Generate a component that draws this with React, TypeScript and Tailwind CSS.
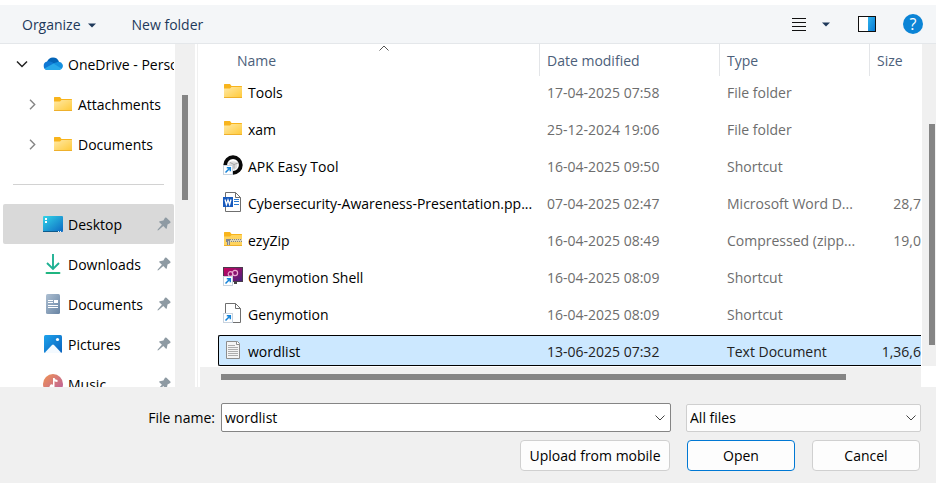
import { useState, type ReactNode } from "react";

/* ---------- Icons ---------- */

function FolderIcon() {
  return (
    <svg width="20" height="16" viewBox="0 0 20 16" className="shrink-0" aria-hidden="true">
      <defs>
        <linearGradient id="folder-front" x1="0" y1="0" x2="1" y2="1">
          <stop offset="0" stopColor="#ffe9a6" />
          <stop offset="1" stopColor="#ffc937" />
        </linearGradient>
      </defs>
      <path d="M1 1.6Q1 1 1.6 1H7l1.500 2h9.900q.6 0 .6.6V6H1z" fill="#f8b41c" />
      <path d="M1 5.500h6L8.500 4H19v10.400q0 .6-.6.6H1.6Q1 15 1 14.400z" fill="url(#folder-front)" />
      <path d="M1 14h18v.5q0 .5-.6.5H1.600Q1 15 1 14.500z" fill="#eeb02c" />
    </svg>
  );
}

function ZipIcon() {
  return (
    <svg width="20" height="16" viewBox="0 0 20 16" className="shrink-0" aria-hidden="true">
      <path d="M1 1.600Q1 1 1.600 1H7l1.500 2h9.900q.6 0 .6.6V6H1z" fill="#f8b41c" />
      <path d="M1 5.500h6L8.500 4H19v10.400q0 .6-.6.6H1.600Q1 15 1 14.400z" fill="#ffd45e" />
      <path d="M1 14h18v1H1z" fill="#eeb02c" />
      <path d="M3 8h16v3H3z" fill="#ddd5b8" />
      <path d="M5 8.500h14M6 10.500h13" stroke="#8d8874" strokeDasharray="1 1" />
      <path d="M3 8h4v6H4V11H3z" fill="#85888d" />
      <path d="M5 10h1v4H5z" fill="#c9ccd0" />
    </svg>
  );
}

function OneDriveIcon() {
  return (
    <svg width="20" height="14" viewBox="0 0 20 14" className="shrink-0" aria-hidden="true">
      <path d="M4 5C5 2 7 .500 10 .500c3 0 5 1.500 6 4.200L11 9 4 7z" fill="#0364b8" />
      <path d="M4.200 4.500c2.300-.5 4.300.3 6.300 1.700L15 9l-7 4H4.500A4.300 4.300 0 0 1 4.200 4.500z" fill="#0f78d4" />
      <path d="M10.500 6.300 15.800 4.700A4.200 4.200 0 0 1 18.500 12L12 9z" fill="#1490df" />
      <path d="M1.500 11.500 10.500 6.500l8.200 5.200c-.7.900-1.700 1.300-2.700 1.300H4.500c-1.200 0-2.300-.6-3-1.500z" fill="#28a8ea" />
    </svg>
  );
}

function DesktopIcon() {
  return (
    <svg width="20" height="16" viewBox="0 0 20 16" className="shrink-0" aria-hidden="true">
      <defs>
        <linearGradient id="desktop-screen" x1="0" y1="0" x2="1" y2="1">
          <stop offset="0" stopColor="#32d5e8" />
          <stop offset="1" stopColor="#0d68c2" />
        </linearGradient>
      </defs>
      <rect width="20" height="16" rx="1" fill="url(#desktop-screen)" />
      <path d="M2 2h2v2H2zM2 5h2v2H2z" fill="#fff" />
      <path d="M0 15h15v1H0z" fill="#0e5b8c" />
      <path d="M15 15.500h1m1 0h1" stroke="#e6f2fb" />
    </svg>
  );
}

function DownloadIcon() {
  return (
    <svg width="20" height="20" viewBox="0 0 20 20" className="shrink-0" aria-hidden="true">
      <path d="M10 0v15M4 9l6 6 6-6" fill="none" stroke="#1fb193" strokeWidth="1.900" />
      <path d="M3.500 19h13" stroke="#1fb580" strokeWidth="1.900" strokeLinecap="round" />
    </svg>
  );
}

function DocumentsIcon() {
  return (
    <svg width="20" height="20" viewBox="0 0 20 20" className="shrink-0" aria-hidden="true">
      <defs>
        <linearGradient id="docs-page" x1="0" y1="0" x2="1" y2="1">
          <stop offset="0" stopColor="#adbfd2" />
          <stop offset="1" stopColor="#6884a3" />
        </linearGradient>
      </defs>
      <rect x="3" width="14" height="20" rx="1.500" fill="url(#docs-page)" />
      <path d="M5 6.500h5M5 8.500h5M5 11.500h10M5 13.500h10" stroke="#fff" />
      <path d="M11 6h4v3h-4z" fill="#fff" />
    </svg>
  );
}

function PicturesIcon() {
  return (
    <svg width="20" height="20" viewBox="0 0 20 20" className="shrink-0" aria-hidden="true">
      <defs>
        <linearGradient id="picture-sky" x1="0" y1="0" x2="1" y2="1">
          <stop offset="0" stopColor="#1fa3ec" />
          <stop offset="1" stopColor="#0a62bd" />
        </linearGradient>
      </defs>
      <rect x="1" y="1" width="18" height="18" rx="1.500" fill="url(#picture-sky)" />
      <path d="M2 18.500 9 11q1-1 2 0l7 7.500q-.500.500-1 .500H3q-.5 0-1-.5z" fill="#f4faff" />
      <circle cx="14.500" cy="5.500" r="1.600" fill="#fff" />
    </svg>
  );
}

function MusicIcon() {
  return (
    <svg width="20" height="20" viewBox="0 0 20 20" className="shrink-0" aria-hidden="true">
      <defs>
        <linearGradient id="music-disc" x1="0" y1="0" x2="1" y2="1">
          <stop offset="0" stopColor="#f19452" />
          <stop offset="1" stopColor="#b55aa5" />
        </linearGradient>
      </defs>
      <circle cx="10" cy="10" r="10" fill="url(#music-disc)" />
      <path d="M10 4h1.500q.5 2 3 2v2q-2 0-3-.8V13a2.500 2.500 0 1 1-1.500-2.300z" fill="#fff" />
    </svg>
  );
}

function PinIcon() {
  return (
    <svg width="14" height="14" viewBox="0 0 14 14" className="shrink-0" aria-hidden="true">
      <path
        d="M8 .800Q8.800.200 9.500.800l3.800 3.800q.6.700-.1 1.300L10.500 7.600 9.800 11.300q-.300.900-1.100.200L6.300 9.100 1.400 13.200l-.900.200.2-.9L4.900 7.700 2.300 5.200q-.4-.8.400-1l3.700-.8z"
        fill="#8e9aa3"
      />
    </svg>
  );
}

function ShortcutBadge() {
  return (
    <>
      <rect x=".5" y="10.500" width="9" height="9" fill="#fff" stroke="#c9d3de" />
      <path d="M2.500 17.500 7 13M3.800 12.700H7.300V16.200" fill="none" stroke="#1583d8" strokeWidth="1.500" />
    </>
  );
}

function ApkIcon() {
  return (
    <svg width="20" height="20" viewBox="0 0 20 20" className="shrink-0" aria-hidden="true">
      <circle cx="10" cy="10" r="7.800" fill="#fff" stroke="#090909" strokeWidth="3.800" />
      <path d="M5 8q4-3 9.500-.5L14 13l-3 2-3-3z" fill="#dcdcdc" />
      <path d="m7 7.500 4 2 4-1.500M11 9.500v4" fill="none" stroke="#999" strokeWidth=".8" />
      <ShortcutBadge />
    </svg>
  );
}

function WordIcon() {
  return (
    <svg width="20" height="20" viewBox="0 0 20 20" className="shrink-0" aria-hidden="true">
      <path d="M2.500.500h10l5 5v14h-15z" fill="#fff" stroke="#6f6f6f" />
      <path d="M12.500.500v5h5" fill="none" stroke="#6f6f6f" />
      <path d="M11 7.500h5M11 9.500h5M11 12.500h5" stroke="#2b7cd3" />
      <rect y="5" width="10" height="10" fill="#185abd" />
      <path d="m2 7.500 1.400 5L5 8l1.600 4.500L8 7.500" fill="none" stroke="#fff" strokeWidth="1.300" />
    </svg>
  );
}

function GenymotionShellIcon() {
  return (
    <svg width="20" height="20" viewBox="0 0 20 20" className="shrink-0" aria-hidden="true">
      <defs>
        <linearGradient id="geny-screen" x1="0" y1="0" x2="1" y2="1">
          <stop offset="0" stopColor="#d0005e" />
          <stop offset="1" stopColor="#42237e" />
        </linearGradient>
      </defs>
      <rect x=".5" y="1.500" width="19" height="14" fill="url(#geny-screen)" stroke="#4a3b4d" />
      <path d="M11 16h3v2h-3z" fill="#454545" />
      <circle cx="7.500" cy="8" r="2.300" fill="none" stroke="#e9aad2" strokeWidth="1.200" />
      <circle cx="12" cy="7" r="2.600" fill="none" stroke="#e9aad2" strokeWidth="1.200" />
      <ShortcutBadge />
    </svg>
  );
}

function BlankShortcutIcon() {
  return (
    <svg width="20" height="20" viewBox="0 0 20 20" className="shrink-0" aria-hidden="true">
      <path d="M2.500.500h10l5 5v14h-15z" fill="#fff" stroke="#6f6f6f" />
      <path d="M12.500.500v5h5" fill="none" stroke="#6f6f6f" />
      <ShortcutBadge />
    </svg>
  );
}

function TextFileIcon() {
  return (
    <svg width="20" height="20" viewBox="0 0 20 20" className="shrink-0" aria-hidden="true">
      <path d="M3.500 1.500h11l2 2v15h-13z" fill="#f4f4f4" stroke="#8d8d8d" />
      <path d="M13.500 1.500v3h3" fill="#fff" stroke="#8d8d8d" />
      <path d="M5 5.500h7M5 7.500h10M5 9.500h10M5 11.500h10M5 13.500h10M5 15.500h10" stroke="#adadad" />
    </svg>
  );
}

function Chevron({ className }: { className: string }) {
  return (
    <svg width="10" height="6" viewBox="0 0 10 6" className={className} aria-hidden="true">
      <path d="m.5.500 4.500 4.500L9.500.500" fill="none" stroke="currentColor" />
    </svg>
  );
}

function Caret() {
  return (
    <svg width="8" height="5" viewBox="0 0 8 5" aria-hidden="true">
      <path d="M0 .500h8L4 4.500z" fill="#1e395b" />
    </svg>
  );
}

/* ---------- Data ---------- */

type Place = { name: string; icon: ReactNode; active?: boolean };

const places: Place[] = [
  { name: "Desktop", icon: <DesktopIcon />, active: true },
  { name: "Downloads", icon: <DownloadIcon /> },
  { name: "Documents", icon: <DocumentsIcon /> },
  { name: "Pictures", icon: <PicturesIcon /> },
  { name: "Music", icon: <MusicIcon /> },
];

type FileRow = { name: string; icon: ReactNode; date: string; type: string; size?: string };

const files: FileRow[] = [
  { name: "Tools", icon: <FolderIcon />, date: "17-04-2025 07:58", type: "File folder" },
  { name: "xam", icon: <FolderIcon />, date: "25-12-2024 19:06", type: "File folder" },
  { name: "APK Easy Tool", icon: <ApkIcon />, date: "16-04-2025 09:50", type: "Shortcut" },
  {
    name: "Cybersecurity-Awareness-Presentation.pp...",
    icon: <WordIcon />,
    date: "07-04-2025 02:47",
    type: "Microsoft Word D...",
    size: "28,7",
  },
  { name: "ezyZip", icon: <ZipIcon />, date: "16-04-2025 08:49", type: "Compressed (zipp...", size: "19,0" },
  { name: "Genymotion Shell", icon: <GenymotionShellIcon />, date: "16-04-2025 08:09", type: "Shortcut" },
  { name: "Genymotion", icon: <BlankShortcutIcon />, date: "16-04-2025 08:09", type: "Shortcut" },
  { name: "wordlist", icon: <TextFileIcon />, date: "13-06-2025 07:32", type: "Text Document", size: "1,36,6" },
];

/* ---------- Sections ---------- */

function Toolbar() {
  return (
    <header className="mt-[5px] flex h-[39px] items-center border-b border-[#e4e7ea] bg-[#f4f6f8] pr-[13px] pl-[22px] text-[#1e395b]">
      <button type="button" className="flex items-center gap-[7px] pt-[2px]">
        Organize <Caret />
      </button>
      <button type="button" className="ml-9 pt-[2px]">
        New folder
      </button>
      <div className="ml-auto flex items-center">
        <button type="button" aria-label="View">
          <svg width="16" height="16" viewBox="0 0 16 16" aria-hidden="true">
            <path d="M1 2.500h14M1 6.500h14M1 10.500h14M1 14.500h14" stroke="#111" />
          </svg>
        </button>
        <button type="button" aria-label="More view options" className="ml-[15px]">
          <Caret />
        </button>
        <button type="button" aria-label="Preview pane" className="ml-7">
          <svg width="18" height="16" viewBox="0 0 18 16" aria-hidden="true">
            <defs>
              <linearGradient id="preview-pane" x1="0" y1="0" x2="1" y2="1">
                <stop offset="0" stopColor="#2fb4ee" />
                <stop offset="1" stopColor="#0a7ad4" />
              </linearGradient>
            </defs>
            <path d="M0 0h18v16H0z" fill="#101010" />
            <path d="M1 1h9v14H1z" fill="#fff" />
            <path d="M10 1h7v14h-7z" fill="url(#preview-pane)" />
          </svg>
        </button>
        <button
          type="button"
          aria-label="Help"
          className="ml-[27px] flex size-5 items-center justify-center rounded-full bg-[#0b84d6] text-[16px] text-white"
        >
          ?
        </button>
      </div>
    </header>
  );
}

function Sidebar() {
  return (
    <nav className="flex w-[195px] shrink-0 text-black" aria-label="Folders">
      <div className="min-w-0 flex-1 overflow-hidden">
        <button type="button" className="flex h-10 w-[174px] items-center overflow-hidden pl-4 whitespace-nowrap">
          <svg width="12" height="8" viewBox="0 0 12 8" className="shrink-0" aria-hidden="true">
            <path d="m1 1.500 5 5 5-5" fill="none" stroke="#222" strokeWidth="1.500" />
          </svg>
          <span className="mr-[5px] ml-[15px]">
            <OneDriveIcon />
          </span>
          <span className="pt-[2px]">OneDrive - Personal</span>
        </button>
        {["Attachments", "Documents"].map((name) => (
          <button key={name} type="button" className="flex h-10 w-full items-center pl-[29px]">
            <svg width="7" height="11" viewBox="0 0 7 11" className="shrink-0" aria-hidden="true">
              <path d="m1 .800 4.700 4.700L1 10.200" fill="none" stroke="#858585" strokeWidth="1.400" />
            </svg>
            <span className="mr-[5px] ml-[17px]">
              <FolderIcon />
            </span>
            <span className="pt-[2px]">{name}</span>
          </button>
        ))}
        <div className="flex h-10 items-center pr-[11px] pl-[13px]">
          <hr className="w-full border-[#d2d2d2]" />
        </div>
        {places.map((place) => (
          <button
            key={place.name}
            type="button"
            className={`ml-[3px] flex h-10 w-[171px] items-center gap-[5px] rounded-xs pr-[3px] pl-10 ${
              place.active ? "bg-[#d9d9d9]" : ""
            }`}
          >
            {place.icon}
            <span className="pt-[2px]">{place.name}</span>
            <span className="ml-auto">
              <PinIcon />
            </span>
          </button>
        ))}
      </div>
      <div className="w-5 bg-[#f0f0f0] pt-[51px] pl-[7px]">
        <div className="h-[105px] w-[6px] bg-[#858585]" />
      </div>
    </nav>
  );
}

function FileTable({ selected, onSelect }: { selected: string; onSelect: (name: string) => void }) {
  return (
    <table className="w-full table-fixed border-collapse text-left whitespace-nowrap">
      <thead className="text-[#4c607a]">
        <tr>
          <th scope="col" className="p-0 font-normal" aria-sort="ascending">
            <div className="relative ml-[11px] h-8 pt-[7px] pl-2">
              <Chevron className="absolute top-[1px] left-1/2 -translate-x-1/2 rotate-180 text-[#555]" />
              Name
            </div>
          </th>
          <th scope="col" className="w-[180px] p-0 font-normal">
            <div className="h-8 border-l border-[#e3e5e8] pt-[7px] pl-[7px]">Date modified</div>
          </th>
          <th scope="col" className="w-[150px] p-0 font-normal">
            <div className="h-8 border-l border-[#e3e5e8] pt-[7px] pl-[7px]">Type</div>
          </th>
          <th scope="col" className="w-[52px] p-0 font-normal">
            <div className="h-8 border-l border-[#e3e5e8] pt-[7px] pl-[7px]">Size</div>
          </th>
        </tr>
      </thead>
      <tbody>
        {files.map((file) => {
          const active = file.name === selected;
          const box = active
            ? "flex h-[31px] items-center border-y border-black bg-[#cce8ff] pt-[2px] text-[#222]"
            : "mb-[6px] flex h-[31px] items-center pt-[2px] text-[#6d6d6d]";
          return (
            <tr key={file.name} aria-selected={active} onClick={() => onSelect(file.name)}>
              <td className="p-0">
                <div className={`${box} ${active ? "rounded-l-xs border-l pl-1" : "pl-[5px]"}`}>
                  <span className="-mt-1">{file.icon}</span>
                  <span className="ml-[5px] text-black">{file.name}</span>
                </div>
              </td>
              <td className="p-0">
                <div className={`${box} pl-2`}>{file.date}</div>
              </td>
              <td className="p-0">
                <div className={`${box} pl-2`}>{file.type}</div>
              </td>
              <td className="p-0">
                <div className={`${box} justify-end`}>{file.size}</div>
              </td>
            </tr>
          );
        })}
      </tbody>
    </table>
  );
}

function Footer({ name, onName }: { name: string; onName: (name: string) => void }) {
  const button = "h-[31px] rounded-[4px] border bg-[#fdfdfd] text-center";
  return (
    <footer className="flex flex-col gap-2 bg-[#f0f0f0] pt-4 pr-[15px] pb-3 text-black">
      <div className="flex items-center">
        <label htmlFor="file-name" className="w-[221px] pr-[6px] text-right">
          File name:
        </label>
        <div className="flex h-[29px] min-w-0 flex-1 items-center rounded-xs border border-[#858585] bg-white">
          <input
            id="file-name"
            value={name}
            onChange={(event) => onName(event.target.value)}
            className="min-w-0 flex-1 px-[3px] outline-none"
          />
          <button type="button" aria-label="Recent file names" className="px-[5px]">
            <Chevron className="text-[#444]" />
          </button>
        </div>
        <div className="relative ml-[15px] w-[235px]">
          <select
            aria-label="File type"
            className="h-7 w-full appearance-none rounded-xs border border-[#cfcfcf] bg-[#fdfdfd] px-[3px]"
          >
            <option>All files</option>
          </select>
          <Chevron className="pointer-events-none absolute top-[11px] right-[5px] text-[#444]" />
        </div>
      </div>
      <div className="flex justify-end gap-[17px] pr-[1px]">
        <button type="button" className={`${button} w-[150px] border-[#d0d0d0]`}>
          Upload from mobile
        </button>
        <button type="button" className={`${button} w-[108px] border-[#0078d4]`}>
          Open
        </button>
        <button type="button" className={`${button} w-[108px] border-[#d0d0d0]`}>
          Cancel
        </button>
      </div>
    </footer>
  );
}

export default function App() {
  const [selected, setSelected] = useState("wordlist");

  return (
    <div className="flex min-h-screen flex-col bg-white font-['Open_Sans','Noto_Sans',sans-serif] text-[14px] leading-5">
      <Toolbar />
      <div className="flex h-[343px]">
        <Sidebar />
        <main className="ml-[2px] flex min-w-0 flex-1 border-l border-[#f0f0f0]">
          <div className="flex min-w-0 flex-1 flex-col">
            <div className="flex-1 pl-5">
              <FileTable selected={selected} onSelect={setSelected} />
            </div>
            <div className="ml-[2px] h-5 bg-[#f0f0f0] pt-[7px] pr-[75px] pl-[21px]">
              <div className="h-[6px] bg-[#858585]" />
            </div>
          </div>
          <div className="mb-[21px] ml-[1px] w-[14px] bg-[#f0f0f0] pt-20 pl-[7px]">
            <div className="h-[221px] w-[6px] bg-[#858585]" />
          </div>
        </main>
      </div>
      <Footer name={selected} onName={setSelected} />
    </div>
  );
}
